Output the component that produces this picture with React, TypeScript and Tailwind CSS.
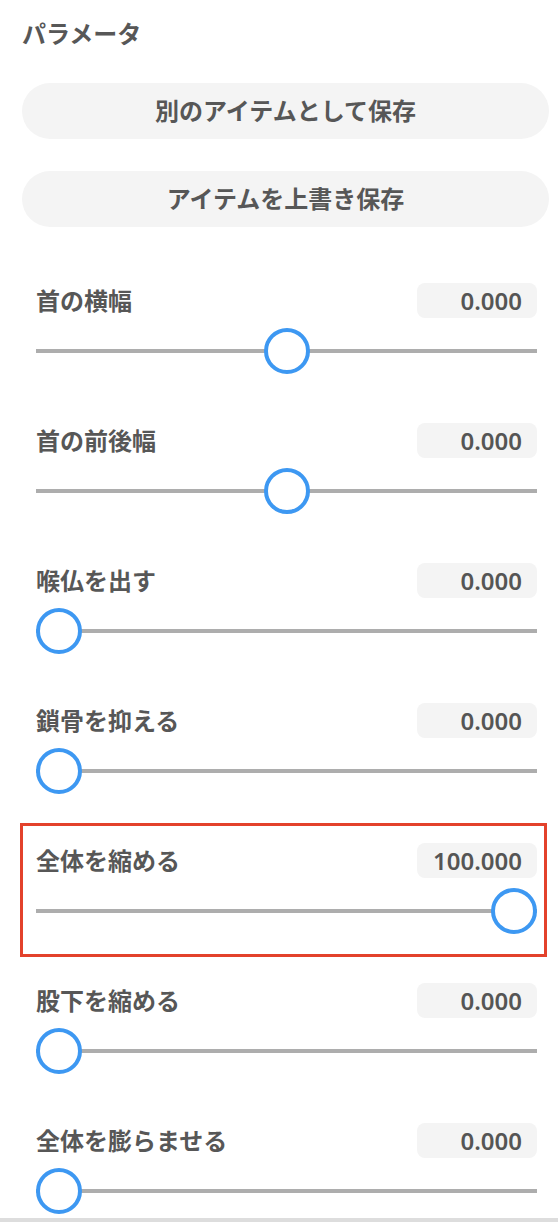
import { useState } from "react";

type Param = { id: string; label: string; value: number; highlight?: boolean };

const initialParams: Param[] = [
  { id: "neck-width", label: "首の横幅", value: 50 },
  { id: "neck-depth", label: "首の前後幅", value: 50 },
  { id: "adams-apple", label: "喉仏を出す", value: 0 },
  { id: "collarbone", label: "鎖骨を抑える", value: 0 },
  { id: "shrink-all", label: "全体を縮める", value: 100, highlight: true },
  { id: "shrink-legs", label: "股下を縮める", value: 0 },
  { id: "inflate-all", label: "全体を膨らませる", value: 0 },
];

const font = {
  fontFamily: '"Noto Sans", "Noto Sans CJK JP", sans-serif',
};

function ParamRow({
  param,
  onChange,
}: {
  param: Param;
  onChange: (v: number) => void;
}) {
  const shown = param.value === 50 && param.id.startsWith("neck") ? 0 : param.value;

  return (
    <div className="relative h-[140px] pt-[20px]">
      {param.highlight && (
        <div className="pointer-events-none absolute top-0 left-[-16px] right-[-10px] h-[134px] border-[3px] border-[#e3412b]" />
      )}

      {/* label + value */}
      <div className="flex h-[35px] items-center justify-between">
        <span className="text-[24px] font-bold leading-none text-[#575757]">
          {param.label}
        </span>
        <div className="flex h-[35px] w-[120px] items-center justify-end rounded-[8px] bg-[#f4f4f4] pr-[15px] text-[24px] font-semibold text-[#555555]">
          {shown.toFixed(3)}
        </div>
      </div>

      {/* slider */}
      <div
        className="relative mt-[10px] h-[46px] cursor-pointer"
        onClick={(e) => {
          const r = e.currentTarget.getBoundingClientRect();
          const pct = Math.min(1, Math.max(0, (e.clientX - r.left - 23) / (r.width - 46)));
          onChange(Math.round(pct * 100));
        }}
      >
        <div className="absolute top-[21px] left-0 right-0 h-[4px] bg-[#adadad]" />
        <div
          className="absolute top-0 h-[46px] w-[46px] rounded-full border-[4px] border-[#3d98f2] bg-white"
          style={{ left: `calc((100% - 46px) * ${param.value / 100})` }}
        />
      </div>
    </div>
  );
}

export default function App() {
  const [params, setParams] = useState(initialParams);

  return (
    <div className="flex h-[1222px] w-[558px] flex-col overflow-hidden bg-white" style={font}>
      <div className="flex-1 overflow-hidden pl-[22px] pr-[9px]">
        <h2 className="pt-[18px] text-[24px] font-bold leading-8 text-[#575757]">パラメータ</h2>

        <div className="mt-[33px] flex flex-col gap-[32px]">
          <button className="h-[56px] w-full rounded-full bg-[#f4f4f4] text-[24px] font-bold text-[#575757]">
            別のアイテムとして保存
          </button>
          <button className="h-[56px] w-full rounded-full bg-[#f4f4f4] text-[24px] font-bold text-[#575757]">
            アイテムを上書き保存
          </button>
        </div>

        <div className="mt-[36px] pl-[14px] pr-[12px]">
          {params.map((p) => (
            <ParamRow
              key={p.id}
              param={p}
              onChange={(v) =>
                setParams((prev) => prev.map((x) => (x.id === p.id ? { ...x, value: v } : x)))
              }
            />
          ))}
        </div>
      </div>
      <div className="h-[4px] shrink-0 bg-[#dddddd]" />
    </div>
  );
}
